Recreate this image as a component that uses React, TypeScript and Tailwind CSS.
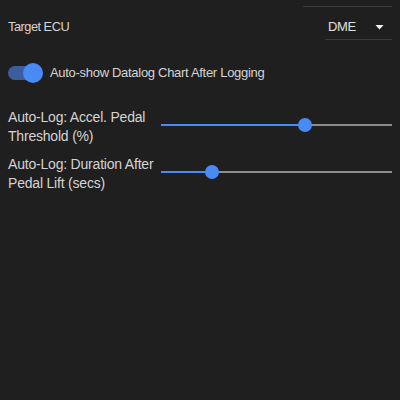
import React from "react";

const sliders = [
  { label: "Auto-Log: Accel. Pedal Threshold (%)", pct: 62.3 },
  { label: "Auto-Log: Duration After Pedal Lift (secs)", pct: 22 },
];

function Slider({ pct }: { pct: number }) {
  return (
    <div className="relative flex-1 h-[14px] flex items-center">
      <div className="w-full h-[2px] bg-[#8c8c8c] flex">
        <div className="h-full bg-[#4a8af4]" style={{ width: `${pct}%` }} />
      </div>
      <div
        className="absolute top-0 w-[14px] h-[14px] -ml-[7px] rounded-full bg-[#4a8af4]"
        style={{ left: `${pct}%` }}
      />
    </div>
  );
}

export default function App() {
  return (
    <div
      className="w-[400px] h-[400px] bg-[#1f1f1f] text-[#d4d4d4] px-2"
      style={{ fontFamily: '"Liberation Sans", Arial, sans-serif' }}
    >
      {/* Target ECU row */}
      <div className="flex justify-between pt-[6px] text-[13px] tracking-[-0.3px]">
        <div className="pt-[11px] leading-[20px] text-[12.8px] tracking-[-0.5px]">Target ECU</div>
        <div className="w-[89px] border-t border-[#3c3c3c] flex justify-end">
          <div className="w-[67px] h-[33px] pt-[10px] pl-[3px] pr-[8px] border-b border-[#3c3c3c] flex justify-between">
            <span className="leading-[20px] text-[#e0e0e0]">DME</span>
            <svg width="9" height="20" viewBox="0 0 9 20">
              <path d="M0.5 8 L8.5 8 L4.5 12.5 Z" fill="#f0f0f0" />
            </svg>
          </div>
        </div>
      </div>

      {/* toggle */}
      <div className="flex items-center mt-[23px] h-[20px] text-[13px] tracking-[-0.3px]">
        <div className="relative w-[34px] h-[14px] rounded-full bg-[#3d5d9e]">
          <div className="absolute -top-[3px] left-[15px] w-[20px] h-[20px] rounded-full bg-[#4a8af4]" />
        </div>
        <span className="ml-[8px] leading-[20px]">Auto-show Datalog Chart After Logging</span>
      </div>

      {/* sliders */}
      <div className="mt-[25px] flex flex-col gap-[9px] text-[14px] tracking-[-0.2px]">
        {sliders.map((s) => (
          <div key={s.label} className="flex items-center">
            <div className="w-[150px] leading-[19px]">{s.label}</div>
            <div className="flex-1 flex ml-[3px] -mt-[5px]">
              <Slider pct={s.pct} />
            </div>
          </div>
        ))}
      </div>
    </div>
  );
}
